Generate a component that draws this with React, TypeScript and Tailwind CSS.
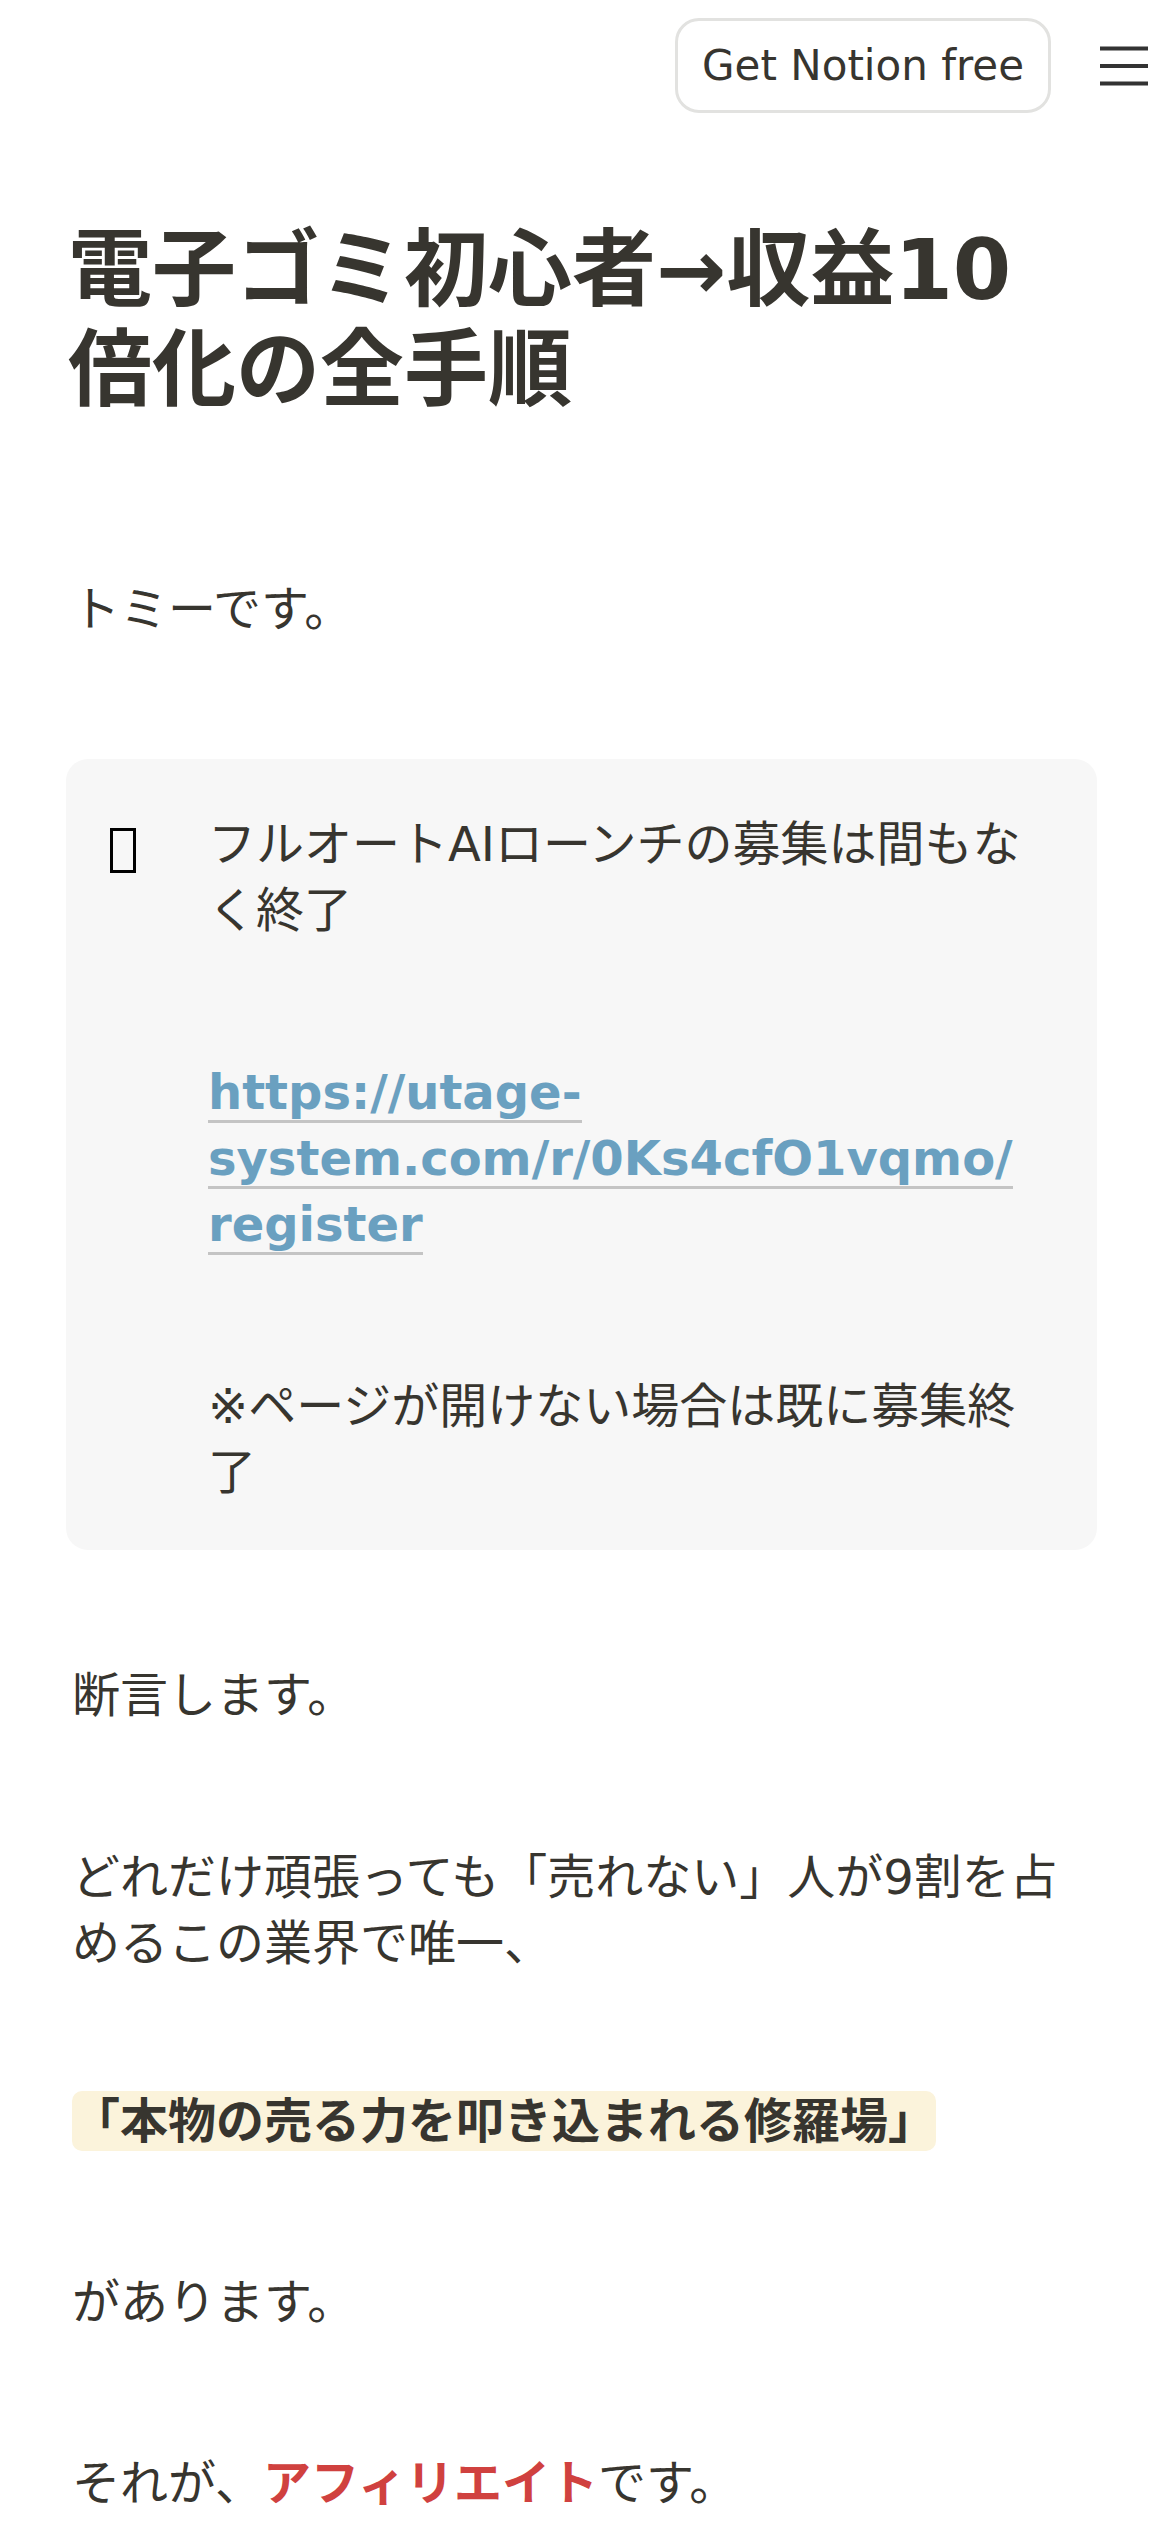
import React from 'react';

const Header: React.FC = () => (
    <header className="flex h-[131px] items-center justify-end pr-[22px]">
        <a className="flex h-[95px] items-center rounded-[24px] border-[3px] border-[#e2e2e0] px-[24px] text-[42px] leading-none text-[#37352f]">
            Get Notion free
        </a>
        <button className="ml-[49px] flex h-[48px] w-[48px] items-center justify-center" aria-label="menu">
            <svg width="48" height="40" viewBox="0 0 48 40" fill="none">
                <path d="M0 2.5H48M0 20H48M0 37.5H48" stroke="#333" strokeWidth="4" />
            </svg>
        </button>
    </header>
);

const Callout: React.FC = () => (
    <div className="mt-[117px] flex rounded-[22px] bg-[#f7f7f7] pb-[45px] pl-[44px] pr-[48px] pt-[52px]">
        <div className="w-[98px] shrink-0">
            <span className="mt-[17px] block h-[45px] w-[26px] border-[3px] border-black" />
        </div>
        <div className="min-w-0 flex-1 text-[48px] leading-[66px]">
            <p>フルオートAIローンチの募集は間もなく終了</p>
            <p className="mt-[116px]">
                <a className="border-b-[3px] border-[#c4c4c4] font-bold text-[#6aa0c0]">
                    https://utage-<br />system.com/r/0Ks4cfO1vqmo/<br />register
                </a>
            </p>
            <p className="mt-[116px]">※ページが開けない場合は既に募集終了</p>
        </div>
    </div>
);

const App: React.FC = () => {
    return (
        <div className="min-h-[2532px] overflow-hidden bg-white font-['DejaVu_Sans','Noto_Sans_CJK_JP',sans-serif] text-[#37352f]">
            <Header />
            <main className="pl-[66px] pr-[73px] pt-[89px]">
                <h1 className="pl-[2px] pr-[40px] text-[84px] font-bold leading-[100px]">
                    電子ゴミ初心者→収益10倍化の全手順
                </h1>

                <p className="mt-[156px] px-[6px] text-[48px] leading-[66px]">トミーです。</p>

                <Callout />

                <div className="px-[6px] text-[48px] leading-[66px]">
                    <p className="mt-[112px]">断言します。</p>
                    <p className="mt-[116px]">どれだけ頑張っても「売れない」人が9割を占めるこの業界で唯一、</p>
                    <p className="mt-[112px]">
                        <span className="rounded-[10px] bg-[#fbf3db] py-[2px] font-bold">
                            「本物の売る力を叩き込まれる修羅場」
                        </span>
                    </p>
                    <p className="mt-[115px]">があります。</p>
                    <p className="mt-[115px]">
                        それが、<span className="font-bold text-[#d0413f]">アフィリエイト</span>です。
                    </p>
                </div>
            </main>
        </div>
    );
};

export default App;
